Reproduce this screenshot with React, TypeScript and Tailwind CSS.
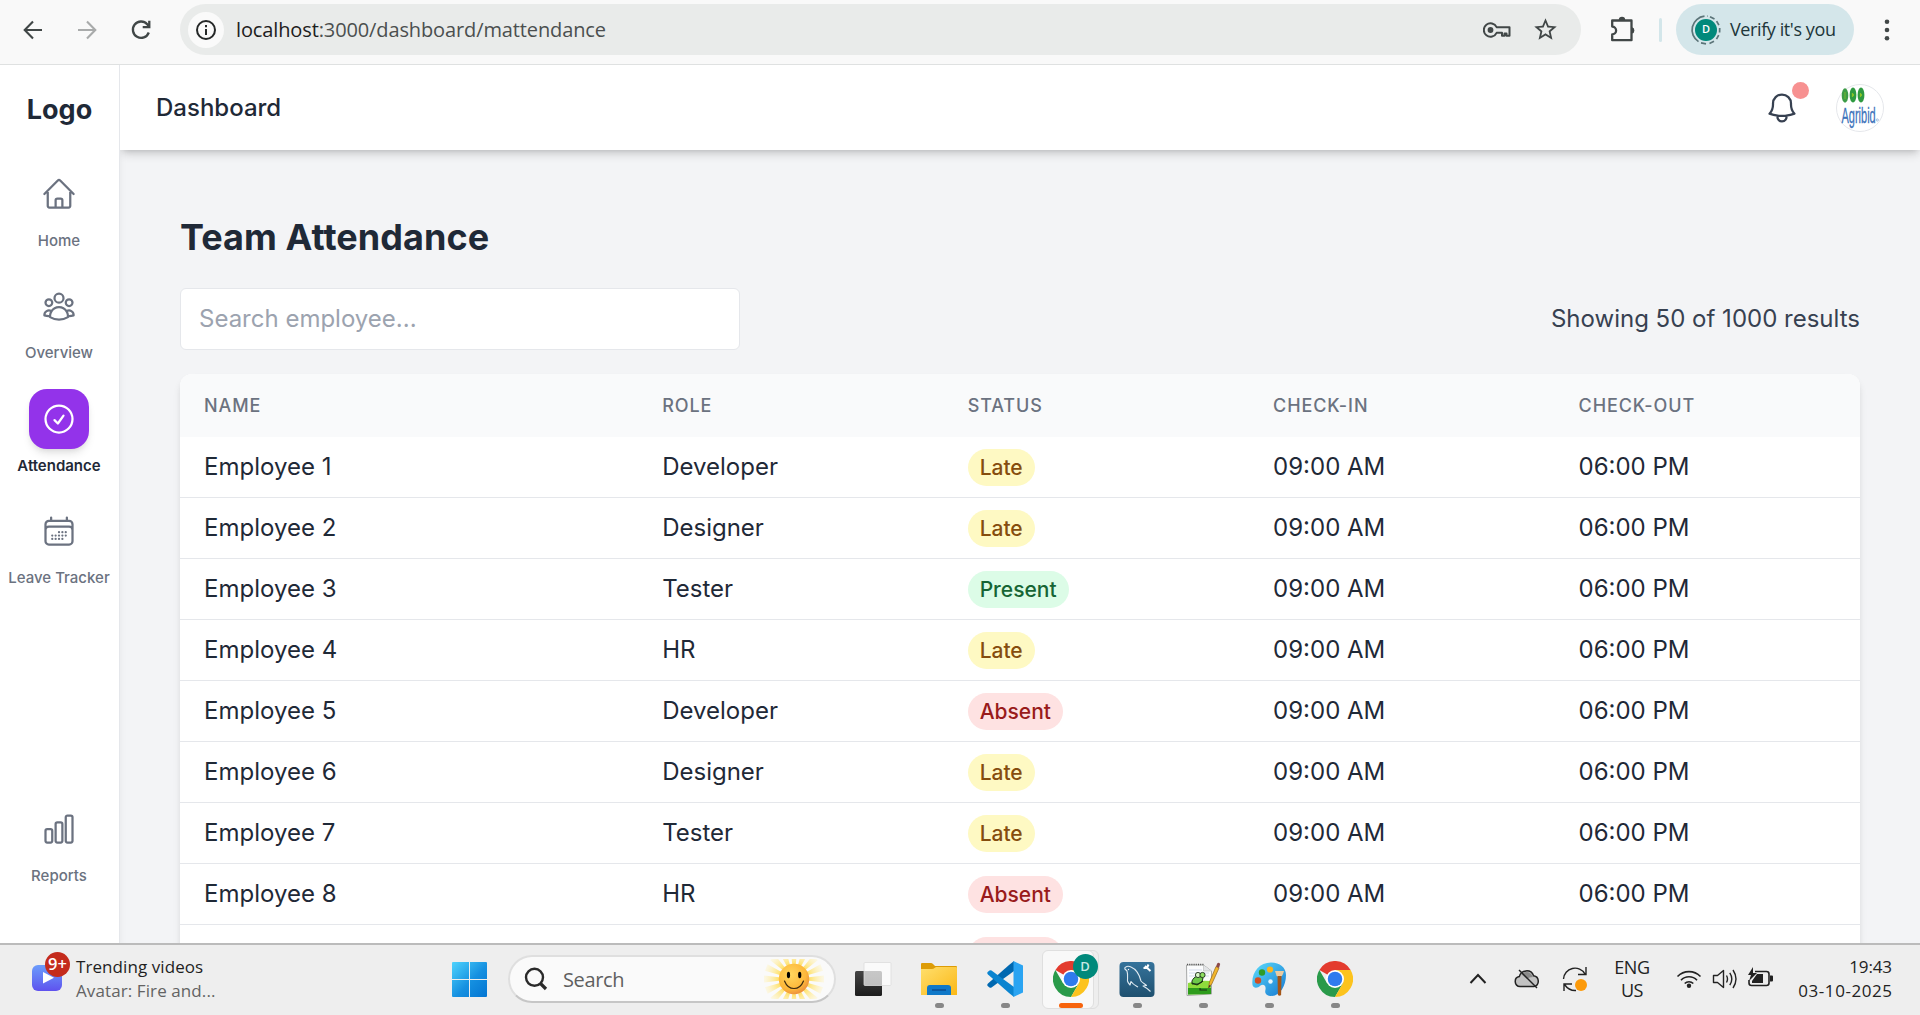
import React from "react";
import {
  HiOutlineHome,
  HiOutlineUserGroup,
  HiOutlineCheckCircle,
  HiOutlineCalendarDays,
  HiOutlineChartBar,
  HiOutlineBell,
} from "react-icons/hi2";
import { MdStarBorder } from "react-icons/md";

type Status = "Late" | "Present" | "Absent";

const statuses: Status[] = ["Late", "Late", "Present", "Late", "Absent", "Late", "Late", "Absent", "Absent"];
const roles = ["Developer", "Designer", "Tester", "HR"];

const badgeStyles: Record<Status, string> = {
  Late: "bg-[#fef9c3] text-[#854d0e]",
  Present: "bg-[#dcfce7] text-[#166534]",
  Absent: "bg-[#fee2e2] text-[#991b1b]",
};

const columns = "grid grid-cols-[1.5fr_1fr_1fr_1fr_1fr]";

function BrowserBar() {
  return (
    <div className="flex h-[65px] shrink-0 items-start border-b border-[#dfe1e1] bg-[#f9f9f9] font-['Open_Sans',sans-serif]">
      <div className="flex h-[59px] w-[180px] items-center pl-[20px] text-[#414747]">
        <svg width="26" height="26" viewBox="0 0 26 26" fill="none" stroke="#414747" strokeWidth="2.1">
          <path d="M22 13H5M13 4.5 4.7 13l8.3 8.5" />
        </svg>
        <svg className="ml-[28px]" width="26" height="26" viewBox="0 0 26 26" fill="none" stroke="#a9abab" strokeWidth="2.1">
          <path d="M4 13h17M13 4.5l8.3 8.5-8.3 8.5" />
        </svg>
        <svg className="ml-[28px]" width="26" height="26" viewBox="0 0 26 26" fill="none" stroke="#414747" strokeWidth="2.3">
          <path d="M20.8 15.5A8.2 8.2 0 1 1 19.2 7.2L21 9.4M21.3 3.8v6.4h-6.6" />
        </svg>
      </div>
      <div className="mt-[4px] flex h-[51px] w-[1401px] items-center rounded-full bg-[#e9ebea] pl-[8px] pr-[22px]">
        <div className="flex size-[36px] items-center justify-center rounded-full bg-[#fafafa]">
          <svg width="22" height="22" viewBox="0 0 22 22" fill="none" stroke="#252828" strokeWidth="2">
            <circle cx="11" cy="11" r="9" />
            <path d="M11 10v6M11 6v2.2" />
          </svg>
        </div>
        <div className="ml-[12px] whitespace-nowrap text-[20px] tracking-[-0.12px] text-[#4b4f4f]">
          <span className="text-[#1d2020]">localhost</span>:3000/dashboard/mattendance
        </div>
        <svg className="ml-auto" width="28" height="18" viewBox="0 0 28 18" fill="none" stroke="#414747" strokeWidth="2">
          <path d="M13.6 6.2A6.7 6.7 0 1 0 13.6 11.8H19V14.8H21.5V12.5H23.5V14.8H26.5V6.2Z" strokeLinejoin="round" />
          <circle cx="7.5" cy="9" r="2.9" fill="#414747" stroke="none" />
        </svg>
        <MdStarBorder className="ml-[21px] size-[27px] text-[#414747]" />
      </div>
      <div className="flex h-[59px] flex-1 items-center">
        <svg className="ml-[28px]" width="27" height="27" viewBox="0 0 27 27" fill="none" stroke="#414747" strokeWidth="2.3" strokeLinejoin="round">
          <path d="M3.200 4.500H22.500V24.200H3.200V18.400A3.600 3.600 0 0 0 3.200 10.600Z" />
          <path d="M9.800 4a3.200 3.200 0 0 1 6.400 0ZM23 11.300a3.200 3.200 0 0 1 0 6.200Z" fill="#414747" stroke="none" />
        </svg>
        <div className="ml-[23px] h-[24px] w-[3px] rounded bg-[#d3e6ea]" />
        <div className="ml-[14px] flex h-[51px] w-[178px] items-center rounded-full bg-[#d4e6ea] pl-[14px]">
          <svg width="32" height="32" viewBox="0 0 32 32" fill="none" stroke="#5b7478" strokeWidth="1.700">
            <path d="M14.500 2.200A13.800 13.800 0 0 0 8.500 27.600M11 28.900l5 .9M19.500 29.400l4.500-2.100M26.500 25.200l2.200-4M29.600 18.500l.1-4.500M28.900 11.200l-2.300-4M24.500 5l-4.500-2.300M17.500 2.200h-.5" />
            <circle cx="16" cy="16" r="11" fill="#00897b" stroke="none" />
          </svg>
          <span className="-ml-[32px] w-[32px] text-center text-[11px] font-semibold text-white">D</span>
          <span className="ml-[8px] whitespace-nowrap text-[18px] tracking-[-0.4px] text-[#20363a]">Verify it's you</span>
        </div>
        <svg className="ml-[30px]" width="6" height="24" viewBox="0 0 6 24" fill="#414747">
          <circle cx="3" cy="3.800" r="2.300" />
          <circle cx="3" cy="12" r="2.300" />
          <circle cx="3" cy="20.200" r="2.300" />
        </svg>
      </div>
    </div>
  );
}

function NavItem({ icon: Icon, label, active }: { icon: React.ComponentType<{ className?: string }>; label: string; active?: boolean }) {
  return (
    <div className="flex h-[112.5px] shrink-0 flex-col items-center pr-px">
      <div
        className={
          active
            ? "flex size-[60px] items-center justify-center rounded-[18px] bg-[#9333ea] text-white shadow-[0_6px_9px_-1.5px_rgba(0,0,0,0.1),0_3px_6px_-3px_rgba(0,0,0,0.1)]"
            : "flex size-[60px] items-center justify-center text-[#6b7280]"
        }
      >
        <Icon className="size-[36px]" />
      </div>
      <span
        className={
          active
            ? "mt-[6px] whitespace-nowrap text-[15px] leading-[22px] font-semibold text-[#1f2937]"
            : "mt-[6px] whitespace-nowrap text-[15px] leading-[22px] font-medium text-[#6b7280]"
        }
      >
        {label}
      </span>
    </div>
  );
}

function Sidebar() {
  return (
    <div className="z-10 flex w-[120px] shrink-0 flex-col border-r border-[#e5e7eb] bg-white shadow-[0_6px_9px_-1.5px_rgba(0,0,0,0.08)]">
      <div className="mt-[27px] text-center text-[27px] leading-[36px] font-bold text-[#1f2937]">Logo</div>
      <nav className="mt-[35.6px] flex flex-col">
        <NavItem icon={HiOutlineHome} label="Home" />
        <NavItem icon={HiOutlineUserGroup} label="Overview" />
        <NavItem icon={HiOutlineCheckCircle} label="Attendance" active />
        <NavItem icon={HiOutlineCalendarDays} label="Leave Tracker" />
      </nav>
      <div className="mt-[185px]">
        <NavItem icon={HiOutlineChartBar} label="Reports" />
      </div>
    </div>
  );
}

function Header() {
  return (
    <header className="z-10 flex h-[85px] shrink-0 items-center bg-white pr-[36px] pl-[36px] shadow-[0_6px_9px_-1.5px_rgba(0,0,0,0.14),0_3px_6px_-3px_rgba(0,0,0,0.16)] [clip-path:inset(0_0_-24px_0)]">
      <h1 className="text-[24px] font-medium text-[#1f2937]">Dashboard</h1>
      <div className="relative ml-auto">
        <HiOutlineBell className="size-[36px] text-[#374151]" />
        <span className="absolute -top-[8px] -right-[9px] size-[17px] rounded-full bg-[#f79191]" />
      </div>
      <svg className="ml-[36px]" width="48" height="48" viewBox="0 0 48 48">
        <circle cx="24" cy="24" r="23.500" fill="#fff" stroke="#e5e7eb" />
        <ellipse cx="9" cy="11.500" rx="3.300" ry="7.200" fill="#3c9b46" />
        <ellipse cx="17" cy="11" rx="3.400" ry="7.400" fill="#2f9a41" />
        <ellipse cx="25" cy="11" rx="3.400" ry="7.400" fill="#2f9a41" />
        <path d="M9 8v7M16.300 9l1.600 2-1.600 2zM24.300 9l1.600 2-1.600 2z" fill="#a8d51e" stroke="#8fc62a" strokeWidth=".7" />
        <text transform="translate(5.500 38.500) scale(.6 1)" fontFamily="Liberation Sans" fontSize="22" fill="#3b72ba" stroke="#3b72ba" strokeWidth=".3" textLength="57" lengthAdjust="spacingAndGlyphs">Agribid</text>
        <circle cx="41.300" cy="36" r="1.100" fill="none" stroke="#7fa3d4" strokeWidth=".7" />
      </svg>
    </header>
  );
}

function AttendanceTable() {
  return (
    <div className="mt-[24px] overflow-hidden rounded-t-[12px] bg-white shadow-[0_6px_9px_-1.5px_rgba(0,0,0,0.1),0_3px_6px_-3px_rgba(0,0,0,0.1)]">
      <div className={`${columns} h-[63px] items-center bg-[#f9fafb] text-[18px] font-medium tracking-[0.9px] text-[#6b7280]`}>
        {["NAME", "ROLE", "STATUS", "CHECK-IN", "CHECK-OUT"].map((c) => (
          <div key={c} className="pl-[24px]">{c}</div>
        ))}
      </div>
      {statuses.map((status, i) => (
        <div key={i} className={`${columns} h-[61px] border-b border-[#e5e7eb] pt-[12px] text-[24px] leading-[36px] text-[#1f2937]`}>
          <div className="pl-[24px]">Employee {i + 1}</div>
          <div className="pl-[24px]">{roles[i % 4]}</div>
          <div className="pl-[24px]">
            <span className={`inline-flex h-[37px] items-center rounded-full px-[12px] align-top text-[21px] font-medium ${badgeStyles[status]}`}>
              {status}
            </span>
          </div>
          <div className="pl-[24px]">09:00 AM</div>
          <div className="pl-[24px]">06:00 PM</div>
        </div>
      ))}
    </div>
  );
}

function ChromeIcon() {
  return (
    <svg width="36" height="36" viewBox="0 0 48 48">
      <path d="M24 24 3.200 12A24 24 0 0 1 44.800 12H24z" fill="#e33b2e" />
      <path d="M3.200 12A24 24 0 0 0 24 48L34.400 30 24 24 13.600 30z" fill="#2a9a4a" />
      <path d="M44.800 12A24 24 0 0 1 24 48L34.400 30 24 12z" fill="#fcc31e" />
      <circle cx="24" cy="24" r="12" fill="#fff" />
      <circle cx="24" cy="24" r="9.700" fill="#2f7bee" />
    </svg>
  );
}

function FolderIcon() {
  return (
    <svg width="36" height="36" viewBox="0 0 36 36">
      <defs>
        <linearGradient id="folder" x1="0" y1="0" x2="1" y2="1">
          <stop stopColor="#ffdf6d" />
          <stop offset="1" stopColor="#fbb816" />
        </linearGradient>
      </defs>
      <path d="M0 3a1 1 0 0 1 1-1h9q1 0 2 1l2 2H35a1 1 0 0 1 1 1v8H0z" fill="#dd9c06" />
      <path d="M0 8h11q1.500 0 2.500-1l1.500-1h20a1 1 0 0 1 1 1v27H0z" fill="url(#folder)" />
      <path d="M6 34v-7a3 3 0 0 1 3-3h18a3 3 0 0 1 3 3v7z" fill="#0f78c8" />
      <path d="M11 29h14" stroke="#0b4d92" strokeWidth="1.500" />
    </svg>
  );
}

function CodeIcon() {
  return (
    <svg width="36" height="36" viewBox="0 0 36 36">
      <path d="M1 22.500 22 4l5-4v10L4.500 26.500q-1 .7-2 0L.7 25q-1-1.300.3-2.500z" fill="#0068b0" />
      <path d="M1 13.500 22 32l5 4V26L4.500 9.500q-1-.7-2 0L.7 11q-1 1.300.3 2.500z" fill="#0a84d0" />
      <path d="M26.500 0 36 4.500v27L26.500 36z" fill="#2aa4f2" />
    </svg>
  );
}

function WorkbenchIcon() {
  return (
    <svg width="36" height="36" viewBox="0 0 36 36">
      <defs>
        <linearGradient id="workbench" x1="0" y1="0" x2="0" y2="1">
          <stop stopColor="#35739b" />
          <stop offset="1" stopColor="#1f506f" />
        </linearGradient>
      </defs>
      <rect x=".5" y="1" width="35" height="35" rx="4" fill="url(#workbench)" />
      <path d="M5.500 7.500C6 5.500 9 4.500 12 6c6 2.500 8.500 8 10 14 1.500 2 4 3 5.500 4.500l-3.500.5c2 1 5 3 7.500 5.500M5.500 7.500 8 10c1 3 .5 6 .5 10 .5 2 1.500 3 2.500 4l1-3.500c2 3 4.500 4 7 5.500" fill="none" stroke="#dfeaf1" strokeWidth="1.100" strokeLinejoin="round" />
      <circle cx="9.500" cy="8.500" r=".7" fill="#fff" />
      <path d="m26 5 5.500 5M29.500 3.500 28 7l-3.500 0" stroke="#fff" strokeWidth="2" fill="none" />
    </svg>
  );
}

function NotepadIcon() {
  return (
    <svg width="36" height="36" viewBox="0 0 36 36">
      <path d="M1.500 4h17l8 6v23L2 34.500z" fill="#fbfcfd" stroke="#a7a9a8" />
      <path d="M18.500 4v6h8" fill="#e2e4e6" stroke="#b8b9b9" strokeWidth=".6" />
      <path d="M2 3.500h17" stroke="#555" strokeWidth="1.500" strokeDasharray="1 1.200" />
      <path d="M4 9h13M4 12h20M4 15h20" stroke="#c3cde4" strokeWidth=".7" />
      <path d="M3 22q10-3 23-2v13L3 33.500z" fill="#8fdc3c" />
      <path d="M3 27h23v6L3 33.500z" fill="#2e9c1c" />
      <path d="M7 20c2-5 7-6 11-3l-1 4-4 2-6 0z" fill="#6dc84a" stroke="#1d3d16" strokeWidth="1" />
      <circle cx="13" cy="14" r="2.600" fill="#d9f5c8" stroke="#20331c" strokeWidth=".9" />
      <circle cx="17.500" cy="14" r="2.600" fill="#90df63" stroke="#20331c" strokeWidth=".9" />
      <path d="M7 22l5 2 6-4M15 27v2h7" fill="none" stroke="#1a2e16" strokeWidth="1.100" />
      <path d="m23.500 27 1-6L31 5.500l3 1.500-7 15.500z" fill="#f2b62c" stroke="#936518" strokeWidth=".7" />
      <path d="m31 5.500 1.200-3q1.500-1.500 3 .5L34 7z" fill="#8d4a48" />
      <path d="m23.500 27 .6-3 1.800 1z" fill="#333" />
    </svg>
  );
}

function PaintIcon() {
  return (
    <svg width="36" height="36" viewBox="0 0 36 36">
      <defs>
        <linearGradient id="paint" x1="0" y1="0" x2="1" y2="1">
          <stop stopColor="#5cdcfb" />
          <stop offset="1" stopColor="#1679d2" />
        </linearGradient>
      </defs>
      <path d="M1.500 24C0 12 8 1.500 20 1.500c9 0 15 5 15 12.500 0 11-6 20.500-14 21-6 0-7.500-3-6.500-6.500.7-4-2-6-5-4-3 3-7 3-8-.5z" fill="url(#paint)" />
      <circle cx="11" cy="11.500" r="3.200" fill="#2e9c28" />
      <circle cx="19" cy="8.500" r="3.100" fill="#fbb41b" />
      <circle cx="7" cy="19.500" r="3.200" fill="#d24e20" />
      <circle cx="19.500" cy="20.500" r="2.200" fill="#e6f6fd" />
      <path d="M24 10h9l-1 3q-1 3-3 3h-2q-2-1-2-3z" fill="#e9cba2" />
      <path d="M26.500 15h4l-.4 19q-1.600 1.500-3.200 0z" fill="#a45618" />
    </svg>
  );
}

function AppSlot({ children }: { children: React.ReactNode }) {
  return (
    <div className="flex h-[70px] w-[66px] shrink-0 flex-col items-center pt-[16px]">
      {children}
      <div className="mt-[6px] h-[5px] w-[9px] rounded-full bg-[#878787]" />
    </div>
  );
}

function Taskbar() {
  return (
    <div className="z-20 flex h-[72px] shrink-0 border-t-2 border-[#bbbbbb] bg-[#eeeeee] font-['Open_Sans',sans-serif]">
      <div className="flex w-[452px] pl-[32px]">
        <div className="relative mt-[20px] h-[26px] w-[30px] rounded-[6px] bg-linear-to-b from-[#6b9cfb] to-[#5f51ee]">
          <svg className="absolute top-[6px] left-[11px]" width="12" height="14" viewBox="0 0 12 14">
            <path d="M0 1v11.500L11 6.800z" fill="#fff" />
          </svg>
          <span className="absolute -top-[13px] left-[13px] flex size-[25px] items-center justify-center rounded-full bg-[#c42b1c] text-[16.5px] font-semibold text-white">9+</span>
        </div>
        <div className="mt-[10px] ml-[14px] text-[17px] leading-[24px] whitespace-nowrap">
          <div className="tracking-[0.08px] text-[#1f1f1f]">Trending videos</div>
          <div className="tracking-[0.1px] text-[#636363]">Avatar: Fire and...</div>
        </div>
      </div>
      <svg className="mt-[17px] shrink-0" width="35" height="35" viewBox="0 0 35 35">
        <defs>
          <linearGradient id="win" x1="0" y1="0" x2="1" y2="1">
            <stop stopColor="#4fd3fd" />
            <stop offset=".55" stopColor="#1590e0" />
            <stop offset="1" stopColor="#0475d2" />
          </linearGradient>
        </defs>
        <path d="M1 0h16v17H0V1q0-1 1-1zM18 0h16q1 0 1 1v16H18zM0 18h17v17H1q-1 0-1-1zM18 18h17v16q0 1-1 1H18z" fill="url(#win)" />
      </svg>
      <div className="mt-[10px] ml-[21px] flex h-[48px] w-[328px] shrink-0 items-center rounded-full border-2 border-[#dfdfdf] border-b-[#c6c6c6] bg-[#fafafa] pr-[10px] pl-[14px]">
        <svg width="24" height="24" viewBox="0 0 24 24" fill="none" stroke="#2a2a2a">
          <circle cx="10.500" cy="10.300" r="8.500" strokeWidth="2.400" />
          <path d="m16.500 16.500 5.500 5.500" strokeWidth="3.200" />
        </svg>
        <span className="mt-[2px] ml-[15px] text-[20px] tracking-[-0.35px] text-[#5f5f5f]">Search</span>
        <svg className="ml-auto" width="60" height="40" viewBox="0 0 60 40">
          <defs>
            <radialGradient id="rayFade" gradientUnits="userSpaceOnUse" cx="30" cy="20" r="30">
              <stop offset=".5" stopColor="#ffe169" />
              <stop offset="1" stopColor="#fff3bd" stopOpacity=".35" />
            </radialGradient>
            <radialGradient id="sunFace" cx=".4" cy=".35" r=".7">
              <stop stopColor="#ffd75e" />
              <stop offset=".7" stopColor="#fdb73a" />
              <stop offset="1" stopColor="#ea8a3e" />
            </radialGradient>
          </defs>
          {Array.from({ length: 16 }, (_, i) => (
            <path key={i} d="M30 20 60 16.500v7z" fill="url(#rayFade)" transform={`rotate(${i * 22.5} 30 20)`} />
          ))}
          <circle cx="30" cy="20" r="15.200" fill="url(#sunFace)" />
          <ellipse cx="24.500" cy="16" rx="1.600" ry="3.200" />
          <ellipse cx="35.700" cy="16" rx="1.600" ry="3.200" />
          <path d="M20.500 22q3 7.500 9.500 7.500T39.500 22" fill="none" stroke="#3d2a10" strokeWidth="1.200" strokeLinecap="round" />
        </svg>
      </div>
      <svg className="mt-[17px] ml-[19px] shrink-0" width="37" height="36" viewBox="0 0 37 36">
        <defs>
          <linearGradient id="pane" x1="0" y1="0" x2="0" y2="1">
            <stop stopColor="#454545" />
            <stop offset="1" stopColor="#1c1c1c" />
          </linearGradient>
        </defs>
        <rect x="0" y="9" width="27" height="25" rx="1.500" fill="url(#pane)" />
        <rect x="9" y=".5" width="27" height="23" rx="1" fill="#fff" fillOpacity=".7" stroke="#dcdcdc" strokeWidth=".8" />
      </svg>
      <div className="ml-[14px] flex shrink-0">
        <AppSlot><FolderIcon /></AppSlot>
        <AppSlot><CodeIcon /></AppSlot>
        <div className="relative flex h-[70px] w-[66px] shrink-0 flex-col items-center pt-[16px]">
          <div className="absolute top-[5px] left-[14px] h-[59px] w-[47px] rounded-[6px] border border-[#dedede]" />
          <div className="absolute top-[5px] left-[4px] h-[59px] w-[52px] rounded-[6px] border border-[#dfdfdf] bg-[#f8f8f8]" />
          <div className="relative -ml-px size-[36px]">
            <ChromeIcon />
            <span className="absolute -top-[7px] left-[20px] flex size-[25px] items-center justify-center rounded-full bg-[#00897b] text-[13px] font-semibold text-[#c9e8e4]">D</span>
          </div>
          <div className="relative mt-[6px] h-[5px] w-[24px] rounded-full bg-[#f7630c]" />
        </div>
        <AppSlot><WorkbenchIcon /></AppSlot>
        <AppSlot><NotepadIcon /></AppSlot>
        <AppSlot><PaintIcon /></AppSlot>
        <AppSlot><ChromeIcon /></AppSlot>
      </div>
      <div className="ml-auto flex h-[70px] items-start pr-[28px] text-[17px] leading-[24px] text-[#222]">
        <svg className="mt-[25px]" width="18" height="18" viewBox="0 0 18 18" fill="none" stroke="#222" strokeWidth="2">
          <path d="m1.500 13 7.500-8 7.500 8" />
        </svg>
        <svg className="mt-[23px] ml-[27px]" width="26" height="22" viewBox="0 0 26 22">
          <path d="M6 18.500a5 5 0 0 1-.7-9.900 7.500 7.500 0 0 1 14.300-.9 5.500 5.500 0 0 1 .4 10.800z" fill="#c2c2c2" stroke="#222" strokeWidth="1.500" />
          <path d="M7 6q8-5 12 3-4 0-6 2z" fill="#8a8a8a" />
          <path d="M5 2 23 20" stroke="#222" strokeWidth="1.400" />
        </svg>
        <svg className="mt-[20px] ml-[22px]" width="26" height="28" viewBox="0 0 26 28" fill="none" stroke="#222" strokeWidth="1.400">
          <path d="M1.500 14A11.500 11.500 0 0 1 23 9M24 2v7.500h-8M2 26v-7h8M2.500 19.500Q7 26 14 25.500" />
          <circle cx="19" cy="20" r="6" fill="#fc9a0b" stroke="none" />
        </svg>
        <div className="mt-[11px] ml-[24px] w-[40px] text-center text-[18px] leading-[23px] tracking-[-0.4px]">
          <div>ENG</div>
          <div>US</div>
        </div>
        <svg className="mt-[23px] ml-[24px]" width="26" height="22" viewBox="0 0 26 22" fill="none" stroke="#222" strokeWidth="1.600">
          <path d="M1.500 8.500a16 16 0 0 1 23 0M5 12.200a11 11 0 0 1 16 0M8.700 15.500a6 6 0 0 1 8.600 0" />
          <circle cx="13" cy="17.700" r="2.200" fill="#222" stroke="none" />
        </svg>
        <svg className="mt-[23px] ml-[10px]" width="26" height="22" viewBox="0 0 26 22" fill="none" stroke="#222" strokeWidth="1.400" strokeLinejoin="round">
          <path d="M1.500 7.500h4l6-5v17l-6-5h-4zM14.500 7.500q2 3.500 0 7M17.800 4.800q4 6 0 12.400M21 2q6 9 0 18" />
        </svg>
        <svg className="mt-[22px] ml-[9px]" width="27" height="22" viewBox="0 0 27 22">
          <path d="M8 4.500h11.500q2.500 0 2.500 2.500v9q0 2.500-2.500 2.500H4.500Q2 18.500 2 16v-3" fill="none" stroke="#222" strokeWidth="1.600" />
          <path d="M10 7h6v9H5v-2zM23 8.500h2q1 0 1 1v4q0 1-1 1h-2zM6 0 1 8h3l-2 6 8-8H6z" fill="#222" />
        </svg>
        <div className="mt-[10px] w-[118px] text-right whitespace-nowrap">
          <div className="tracking-[-0.1px]">19:43</div>
          <div className="-mr-[0.5px] tracking-[0.55px]">03-10-2025</div>
        </div>
      </div>
    </div>
  );
}

export default function App() {
  return (
    <div className="flex h-[1015px] w-[1920px] flex-col overflow-hidden bg-white font-['Inter',sans-serif]">
      <BrowserBar />
      <div className="flex min-h-0 flex-1 overflow-hidden">
        <Sidebar />
        <div className="flex min-w-0 flex-1 flex-col">
          <Header />
          <main className="min-h-0 flex-1 overflow-hidden bg-[#f3f4f6] px-[60px] pt-[60px]">
            <h2 className="text-[36px] leading-[54px] font-bold tracking-[0.05px] text-[#1f2937]">Team Attendance</h2>
            <div className="mt-[24px] flex items-center justify-between">
              <input
                className="h-[62px] w-[560px] rounded-[6px] border border-[#e5e7eb] bg-white px-[18px] pb-[2px] text-[24px] outline-none placeholder:text-[#9ca3af]"
                placeholder="Search employee..."
              />
              <span className="text-[24px] text-[#374151]">Showing 50 of 1000 results</span>
            </div>
            <AttendanceTable />
          </main>
        </div>
      </div>
      <Taskbar />
    </div>
  );
}
